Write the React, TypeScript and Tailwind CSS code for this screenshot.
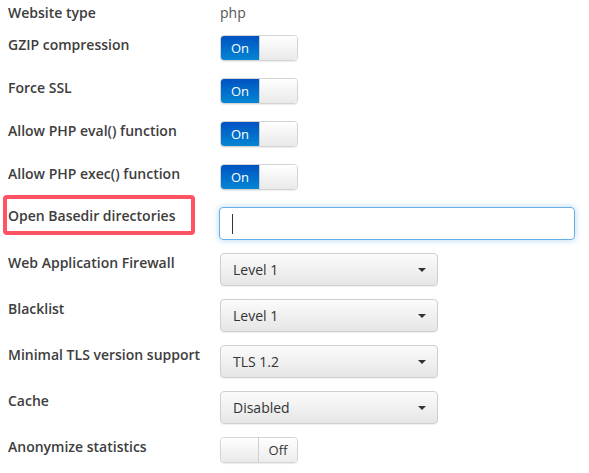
import React from 'react';

function Toggle({ on }: { on: boolean }) {
  return (
    <div className="flex h-[26px] w-[78px] overflow-hidden rounded-[4px] border border-[#d4d4d4] text-[13px] shadow-[0_1px_1px_rgba(0,0,0,0.08)]">
      {on ? (
        <>
          <div className="flex w-[38px] items-center justify-center bg-gradient-to-b from-[#0052c2] to-[#0a86d4] text-white">On</div>
          <div className="flex-1 border-l border-[#d0d0d0] bg-gradient-to-b from-[#ffffff] to-[#e9e9e9]" />
        </>
      ) : (
        <>
          <div className="w-[38px] border-r border-[#d0d0d0] bg-gradient-to-b from-[#ffffff] to-[#e9e9e9]" />
          <div className="flex flex-1 items-center justify-center bg-gradient-to-b from-[#ffffff] to-[#ececec] text-[#333]">Off</div>
        </>
      )}
    </div>
  );
}

function Select({ value }: { value: string }) {
  return (
    <div className="flex h-[33px] w-[218px] items-center justify-between rounded-[4px] border border-[#cfcfcf] bg-gradient-to-b from-[#fbfbfb] to-[#e6e6e6] pl-[12px] pr-[11px] text-[#333] shadow-[0_1px_1px_rgba(0,0,0,0.06)]">
      <span>{value}</span>
      <svg width="8" height="4" viewBox="0 0 8 4">
        <path d="M0 0h8L4 4z" fill="#333" />
      </svg>
    </div>
  );
}

const toggles = [
  ['GZIP compression', true],
  ['Force SSL', true],
  ['Allow PHP eval() function', true],
  ['Allow PHP exec() function', true],
] as const;

const selects = [
  ['Web Application Firewall', 'Level 1'],
  ['Blacklist', 'Level 1'],
  ['Minimal TLS version support', 'TLS 1.2'],
  ['Cache', 'Disabled'],
];

export default function App() {
  return (
    <div className="h-[473px] w-[589px] bg-white pl-[8px] font-['Open_Sans',sans-serif] text-[14px] leading-[20px] text-[#333]">
      <div className="flex h-[35px] pt-[3px]">
        <div className="w-[211px] font-semibold text-[#3d3d3d]">Website type</div>
        <div className="pl-[1px] text-[#555]">php</div>
      </div>

      {toggles.map(([label, on]) => (
        <div key={label} className="flex h-[43px]">
          <div className="w-[212px] font-semibold text-[#3d3d3d]">{label}</div>
          <Toggle on={on} />
        </div>
      ))}

      <div className="flex h-[46px]">
        <div className="relative w-[211px] font-semibold text-[#3d3d3d]">
          <span className="relative -top-[1px]">Open Basedir directories</span>
          <span className="pointer-events-none absolute -left-[5px] -top-[12px] h-[40px] w-[192px] rounded-[4px] border-4 border-[#ff5263]" />
        </div>
        <div className="flex h-[33px] w-[356px] items-center rounded-[4px] border border-[#66afe9] pl-[12px] shadow-[0_0_6px_rgba(102,175,233,0.5)]">
          <div className="h-[20px] w-px bg-[#333]" />
        </div>
      </div>

      {selects.map(([label, value]) => (
        <div key={label} className="flex h-[46px]">
          <div className="w-[212px] font-semibold text-[#3d3d3d]">{label}</div>
          <Select value={value} />
        </div>
      ))}

      <div className="flex h-[36px]">
        <div className="w-[212px] font-semibold text-[#3d3d3d]">Anonymize statistics</div>
        <Toggle on={false} />
      </div>
    </div>
  );
}
